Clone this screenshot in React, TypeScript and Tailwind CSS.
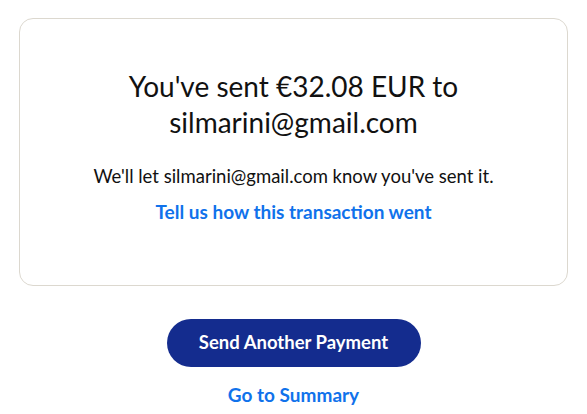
export default function App() {
  return (
    <div
      className="min-h-[414px] w-full bg-white px-[19px] pt-[18px]"
      style={{ fontFamily: 'Lato, "Open Sans", sans-serif' }}
    >
      <div className="flex flex-col items-center rounded-[14px] border border-[#dcd8cf] pt-[49px] pb-[61px] text-center">
        <h1 className="text-[28px] leading-[36px] font-normal text-[#111111]">
          You've sent €32.08 EUR to
          <br />
          silmarini@gmail.com
        </h1>
        <p className="mt-[24px] text-[18.5px] leading-[24px] text-[#111111]">
          We'll let silmarini@gmail.com know you've sent it.
        </p>
        <a className="mt-[12px] text-[19px] leading-[24px] font-bold text-[#1072eb]" href="#">
          Tell us how this transaction went
        </a>
      </div>
      <div className="flex flex-col items-center">
        <button className="mt-[33px] h-[48px] w-[254px] rounded-full bg-[#142c8e] text-[18.5px] font-bold text-white">
          Send Another Payment
        </button>
        <a className="mt-[16px] text-[19px] leading-[24px] font-bold text-[#1072eb]" href="#">
          Go to Summary
        </a>
      </div>
    </div>
  )
}
